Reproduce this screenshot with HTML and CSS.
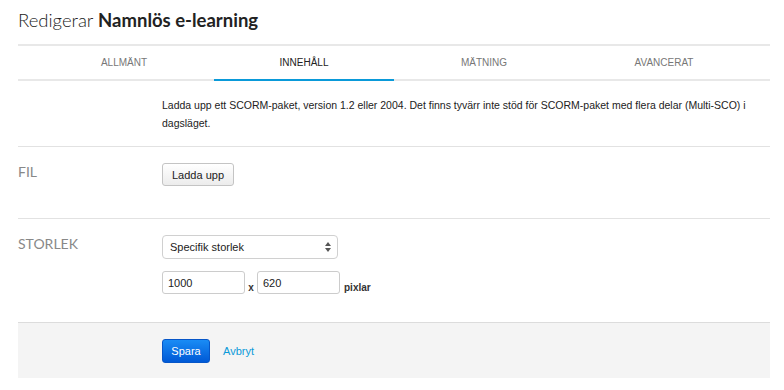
FILE: index.html
```html
<!DOCTYPE html>
<html lang="sv">
<head>
    <meta charset="UTF-8">
    <title>Redigerar Namnlös e-learning</title>
    <link rel="stylesheet" href="styles.css">
</head>
<body>
<div class="page">
    <h1 class="page-title">Redigerar <b>Namnlös e-learning</b></h1>
    <div class="tabs">
        <div class="tab">Allmänt</div>
        <div class="tab active">Innehåll</div>
        <div class="tab">Mätning</div>
        <div class="tab">Avancerat</div>
    </div>
    <div class="form-row intro">
        <div class="label"></div>
        <div class="field">
            <p class="help">Ladda upp ett SCORM-paket, version 1.2 eller 2004. Det finns tyvärr inte stöd för SCORM-paket med flera delar (Multi-SCO) i dagsläget.</p>
        </div>
    </div>
    <div class="form-row file-row">
        <div class="label">Fil</div>
        <div class="field">
            <button class="btn-default">Ladda upp</button>
        </div>
    </div>
    <div class="form-row size-row">
        <div class="label">Storlek</div>
        <div class="field">
            <div class="select">
                <span>Specifik storlek</span>
                <svg width="6" height="10" viewBox="0 0 6 10"><path d="M3 0 L6 4 L0 4 Z M3 10 L6 6 L0 6 Z" fill="#555"/></svg>
            </div>
            <div class="size-inputs">
                <input class="text-input" type="text" value="1000">
                <span class="times">x</span>
                <input class="text-input" type="text" value="620">
                <span class="unit">pixlar</span>
            </div>
        </div>
    </div>
    <div class="form-actions">
        <button class="btn-primary">Spara</button>
        <a class="cancel" href="#">Avbryt</a>
    </div>
</div>
</body>
</html>
```

FILE: styles.css
```css
* {
    margin: 0;
    padding: 0;
    box-sizing: border-box;
}

body {
    background: #fff;
    font-family: "Liberation Sans", Arial, sans-serif;
    color: #333;
}

.page {
    width: 752px;
    margin-left: 18px;
}

.page-title {
    font-family: Lato, sans-serif;
    font-size: 18.5px;
    font-weight: 300;
    line-height: 24px;
    padding-top: 8px;
    height: 44px;
    color: #222;
}

.page-title b {
    font-weight: 700;
}

.tabs {
    display: flex;
    justify-content: center;
    border-top: 2px solid #e8e8e8;
    border-bottom: 2px solid #e8e8e8;
    height: 37px;
}

.tab {
    width: 180px;
    text-align: center;
    font-size: 10px;
    text-transform: uppercase;
    color: #777;
    line-height: 33px;
    border-bottom: 2px solid transparent;
    margin-bottom: -2px;
}

.tab.active {
    color: #222;
    border-bottom-color: #0a9ad9;
}

.form-row {
    display: grid;
    grid-template-columns: 144px 1fr;
    border-bottom: 1px solid #e2e2e2;
}

.label {
    font-family: Lato, sans-serif;
    font-size: 14px;
    text-transform: uppercase;
    color: #888;
    line-height: 18px;
}

.intro {
    height: 66px;
    padding-top: 15px;
}

.help {
    font-size: 10.5px;
    line-height: 18px;
    color: #222;
    width: 600px;
}

.file-row {
    height: 72px;
    padding-top: 16px;
}

.btn-default {
    font-family: "Liberation Sans", Arial, sans-serif;
    font-size: 11px;
    color: #222;
    height: 23px;
    padding: 0 9px;
    border: 1px solid #c4c4c4;
    border-radius: 3px;
    background: linear-gradient(#fff, #ececec);
}

.size-row {
    height: 103px;
    padding-top: 16px;
    border-bottom: 0;
}

.select {
    display: flex;
    align-items: center;
    justify-content: space-between;
    width: 176px;
    height: 24px;
    padding: 0 6px 0 7px;
    border: 1px solid #d0d0d0;
    border-radius: 4px;
    font-size: 11px;
    color: #222;
    background: #fff;
}

.size-inputs {
    display: flex;
    align-items: flex-end;
    margin-top: 12px;
}

.text-input {
    width: 83px;
    height: 23px;
    padding: 0 5px;
    border: 1px solid #ccc;
    border-radius: 3px;
    font-family: "Liberation Sans", Arial, sans-serif;
    font-size: 11px;
    color: #222;
    outline: none;
}

.times {
    width: 12px;
    text-align: center;
    font-size: 10px;
    font-weight: bold;
    line-height: 13px;
    color: #333;
}

.unit {
    margin-left: 4px;
    font-size: 10px;
    font-weight: bold;
    line-height: 13px;
    color: #333;
}

.form-actions {
    display: flex;
    align-items: center;
    gap: 13px;
    height: 56px;
    padding-left: 144px;
    background: #f4f4f4;
    border-top: 1px solid #dcdcdc;
}

.btn-primary {
    width: 48px;
    height: 24px;
    border: 1px solid #0656c8;
    border-radius: 3px;
    background: linear-gradient(#1a8cf5, #0059d6);
    color: #fff;
    font-family: "Liberation Sans", Arial, sans-serif;
    font-size: 11px;
}

.cancel {
    font-size: 11px;
    color: #0a9ad9;
    text-decoration: none;
}
```
